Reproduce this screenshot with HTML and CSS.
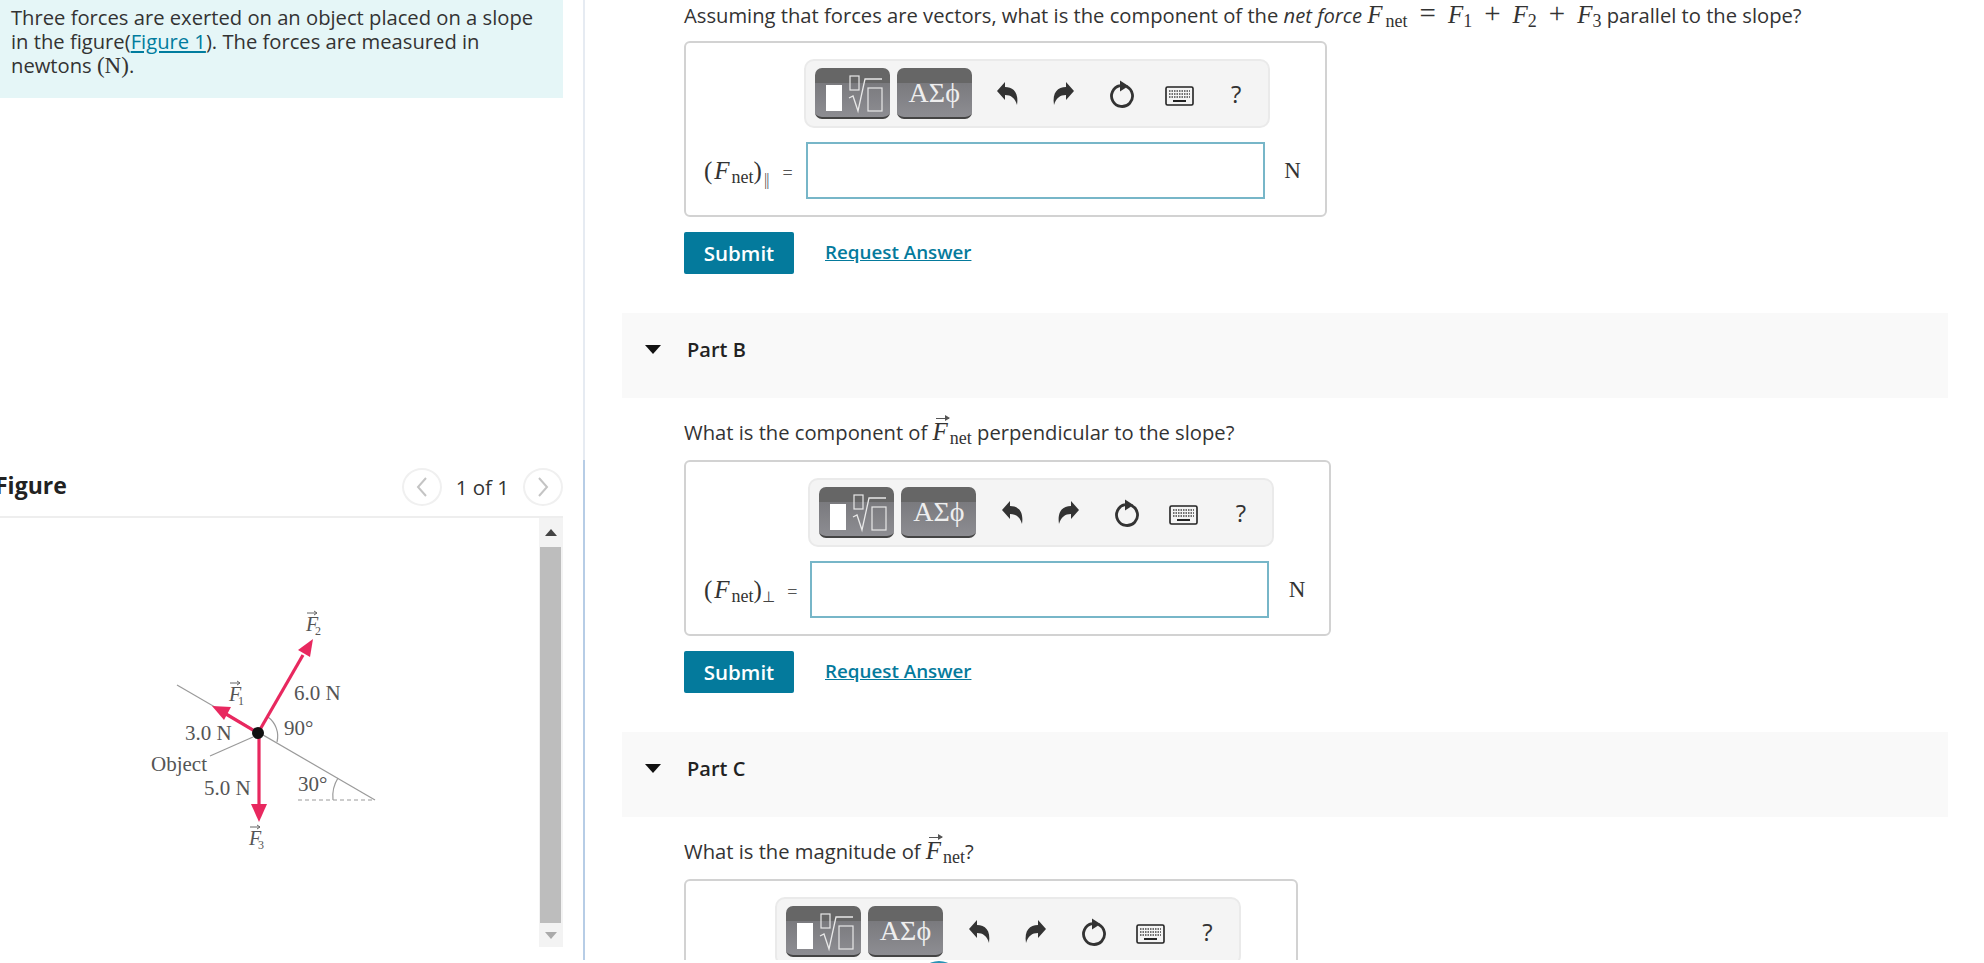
FILE: index.html
```html
<!DOCTYPE html>
<html lang="en">
<head>
  <meta charset="UTF-8">
  <title>Forces on a slope</title>
  <link rel="stylesheet" href="styles.css">
</head>
<body>
<svg class="icon-defs" xmlns="http://www.w3.org/2000/svg">
  <symbol id="ico-root" viewBox="0 0 75 51">
    <rect x="11" y="19" width="16" height="26" fill="#fff"/>
    <rect x="35" y="10" width="9" height="14" fill="none" stroke="#e8e8e8" stroke-width="1.2"/>
    <path d="M34 32 L38 30 L43 45 L50 13 H67" fill="none" stroke="#e8e8e8" stroke-width="1.3"/>
    <rect x="53" y="22" width="14" height="23" fill="none" stroke="#e8e8e8" stroke-width="1.2"/>
  </symbol>
  <symbol id="ico-undo" viewBox="0 0 24 26">
    <path d="M1 10 L9 1 V6 C17 6 23 11 21 24 C19 17 15 14 9 14 V19 Z" fill="#333"/>
  </symbol>
  <symbol id="ico-reset" viewBox="0 0 26 28">
    <path d="M17.500 6.500 A10.500 10.500 0 1 1 11 5.700" fill="none" stroke="#333" stroke-width="2.800"/>
    <path d="M11 0.500 L19.500 6 L11 11.500 Z" fill="#333"/>
  </symbol>
  <symbol id="ico-keys" viewBox="0 0 29 20">
    <rect x="1" y="1" width="27" height="18" rx="1.500" fill="#f4f4f4" stroke="#222" stroke-width="1.600"/>
    <path d="M4 5 H25 M4 8 H25 M4 11 H25" stroke="#444" stroke-width="1.500" stroke-dasharray="1.500 1"/>
    <path d="M8 15 H21" stroke="#222" stroke-width="2"/>
  </symbol>
</svg>

<div class="page">
  <div class="left">
    <div class="intro">
      Three forces are exerted on an object placed on a slope in the figure(<a href="#">Figure 1</a>). The forces are measured in newtons <span class="math-n">(N)</span>.
    </div>

    <div class="fig-head">
      <h2>Figure</h2>
      <div class="pager">
        <span class="pager-btn"><svg width="14" height="22"><path d="M11 2 L3 11 L11 20" fill="none" stroke="#c4c4c4" stroke-width="2"/></svg></span>
        <span class="pager-text">1 of 1</span>
        <span class="pager-btn"><svg width="14" height="22"><path d="M3 2 L11 11 L3 20" fill="none" stroke="#c4c4c4" stroke-width="2"/></svg></span>
      </div>
    </div>

    <div class="fig-body">
      <div class="fig-area">
        <svg class="diagram" width="539" height="430" viewBox="0 518 539 430" xmlns="http://www.w3.org/2000/svg">
          <g fill="none" stroke="#9a9a9a" stroke-width="1.200">
            <path d="M177 685 L375 800"/>
            <path d="M210 756 L253 737"/>
            <path d="M298 800 H375" stroke-dasharray="4 3"/>
            <path d="M268 717 A24 24 0 0 1 277 742"/>
            <path d="M338 778 A34 34 0 0 0 333 800"/>
          </g>
          <g stroke="#e8285f" stroke-width="3.200" fill="#e8285f">
            <path d="M258 733 L303 655"/>
            <path d="M313 639 L298 650 L310 657 Z" stroke="none"/>
            <path d="M258 733 L226 714"/>
            <path d="M212 706 L231 707 L224 720 Z" stroke="none"/>
            <path d="M259 733 V806"/>
            <path d="M259 822 L251 804 H267 Z" stroke="none"/>
          </g>
          <circle cx="258" cy="733" r="6" fill="#111"/>
          <g class="fig-label">
            <text x="294" y="700">6.0 N</text>
            <text x="185" y="740">3.0 N</text>
            <text x="284" y="735">90°</text>
            <text x="151" y="771">Object</text>
            <text x="204" y="795">5.0 N</text>
            <text x="298" y="791">30°</text>
          </g>
          <g class="fig-force">
            <text x="306" y="631">F</text><text class="fig-sub" x="315" y="635">2</text>
            <text x="229" y="701">F</text><text class="fig-sub" x="238" y="705">1</text>
            <text x="249" y="845">F</text><text class="fig-sub" x="258" y="849">3</text>
          </g>
          <g fill="none" stroke="#666" stroke-width="1">
            <path d="M307 613 H317 M314 611 L317 613 L314 615"/>
            <path d="M230 683 H240 M237 681 L240 683 L237 685"/>
            <path d="M250 827 H260 M257 825 L260 827 L257 829"/>
          </g>
        </svg>
      </div>
      <div class="scrollbar">
        <div class="scroll-btn"><span class="arrow-up"></span></div>
        <div class="scroll-thumb"></div>
        <div class="scroll-btn"><span class="arrow-down"></span></div>
      </div>
    </div>
  </div>

  <div class="divider"></div>

  <div class="right">
    <p class="question first">Assuming that forces are vectors, what is the component of the <em>net force</em> <span class="math"><i>F</i><span class="sub wide">net</span><span class="op">=</span><i>F</i><span class="sub">1</span><span class="op">+</span><i>F</i><span class="sub">2</span><span class="op">+</span><i>F</i><span class="sub">3</span></span> parallel to the slope?</p>

    <div class="answer-box">
      <div class="toolbar">
        <button class="tpl-btn"><svg width="75" height="51"><use href="#ico-root"/></svg></button>
        <button class="tpl-btn tpl-greek">ΑΣϕ</button>
        <span class="tool tool-first"><svg width="24" height="26"><use href="#ico-undo"/></svg></span>
        <span class="tool"><svg class="flip" width="24" height="26"><use href="#ico-undo"/></svg></span>
        <span class="tool"><svg width="26" height="28"><use href="#ico-reset"/></svg></span>
        <span class="tool tool-low"><svg width="29" height="20"><use href="#ico-keys"/></svg></span>
        <span class="tool tool-help">?</span>
      </div>
      <label class="ans-label math">(<i>F</i><span class="sub">net</span>)<span class="sub par">||</span> <span class="eq">=</span></label>
      <input class="ans-input" type="text">
      <span class="ans-unit">N</span>
    </div>
    <div class="actions">
      <button class="submit">Submit</button>
      <a class="request" href="#">Request Answer</a>
    </div>

    <div class="part-bar"><span class="caret"></span><span>Part B</span></div>
    <p class="question">What is the component of <span class="math"><i class="vec">F</i><span class="sub">net</span></span> perpendicular to the slope?</p>

    <div class="answer-box">
      <div class="toolbar">
        <button class="tpl-btn"><svg width="75" height="51"><use href="#ico-root"/></svg></button>
        <button class="tpl-btn tpl-greek">ΑΣϕ</button>
        <span class="tool tool-first"><svg width="24" height="26"><use href="#ico-undo"/></svg></span>
        <span class="tool"><svg class="flip" width="24" height="26"><use href="#ico-undo"/></svg></span>
        <span class="tool"><svg width="26" height="28"><use href="#ico-reset"/></svg></span>
        <span class="tool tool-low"><svg width="29" height="20"><use href="#ico-keys"/></svg></span>
        <span class="tool tool-help">?</span>
      </div>
      <label class="ans-label math">(<i>F</i><span class="sub">net</span>)<span class="sub perp">⊥</span> <span class="eq">=</span></label>
      <input class="ans-input" type="text">
      <span class="ans-unit">N</span>
    </div>
    <div class="actions">
      <button class="submit">Submit</button>
      <a class="request" href="#">Request Answer</a>
    </div>

    <div class="part-bar"><span class="caret"></span><span>Part C</span></div>
    <p class="question">What is the magnitude of <span class="math"><i class="vec">F</i><span class="sub">net</span></span>?</p>

    <div class="answer-box">
      <div class="toolbar">
        <button class="tpl-btn"><svg width="75" height="51"><use href="#ico-root"/></svg></button>
        <button class="tpl-btn tpl-greek">ΑΣϕ</button>
        <span class="tool tool-first"><svg width="24" height="26"><use href="#ico-undo"/></svg></span>
        <span class="tool"><svg class="flip" width="24" height="26"><use href="#ico-undo"/></svg></span>
        <span class="tool"><svg width="26" height="28"><use href="#ico-reset"/></svg></span>
        <span class="tool tool-low"><svg width="29" height="20"><use href="#ico-keys"/></svg></span>
        <span class="tool tool-help">?</span>
      </div>
      <label class="ans-label ans-label-short math"></label>
      <input class="ans-input" type="text">
    </div>
  </div>
</div>
<div class="float-btn"></div>
</body>
</html>
```

FILE: styles.css
```css
* {
  margin: 0;
  padding: 0;
  box-sizing: border-box;
}

body {
  background: #fff;
  color: #333;
  font-family: "Open Sans", sans-serif;
  font-size: 20.2px;
  height: 963px;
  overflow: hidden;
}

.icon-defs {
  position: absolute;
  width: 0;
  height: 0;
}

.page {
  display: flex;
  height: 960px;
  overflow: hidden;
}

/* peeks in under the bottom edge */
.float-btn {
  position: absolute;
  left: 918px;
  top: 961px;
  width: 42px;
  height: 42px;
  border-radius: 50%;
  background: #2a93b5;
}

/* left column */
.left {
  width: 583px;
  flex: none;
  overflow: hidden;
}

.divider {
  width: 2px;
  flex: none;
  background: linear-gradient(#e6ebf2 460px, #b7cde6 460px);
}

.intro {
  width: 563px;
  height: 98px;
  background: #e5f6f7;
  padding: 5px 14px 0 11px;
  font-size: 20.2px;
  line-height: 24px;
}

.intro a {
  color: #007c9e;
}

.math-n {
  font-family: "Liberation Serif", serif;
  font-size: 23px;
}

.fig-head {
  width: 563px;
  height: 62px;
  margin-top: 358px;
  padding-bottom: 2px;
  display: flex;
  align-items: center;
  justify-content: space-between;
  border-bottom: 2px solid #eee;
}

.fig-head h2 {
  font-size: 23px;
  font-weight: 700;
  color: #222;
  margin: 0 0 1px -5px;
}

.pager {
  display: flex;
  align-items: center;
  gap: 14px;
  margin-top: 3px;
}

.pager-btn {
  width: 40px;
  height: 38px;
  border: 2px solid #f0f0f0;
  border-radius: 50%;
  display: flex;
  align-items: center;
  justify-content: center;
}

.pager-text {
  font-size: 20.5px;
}

.fig-body {
  display: flex;
  width: 563px;
}

.fig-area {
  width: 539px;
  flex: none;
}

.diagram {
  display: block;
}

.fig-label text {
  font-family: "Liberation Serif", serif;
  font-size: 21px;
  fill: #555;
}

.fig-force text {
  font-family: "Liberation Serif", serif;
  font-style: italic;
  font-size: 20px;
  fill: #555;
}

.fig-force .fig-sub {
  font-style: normal;
  font-size: 12px;
}

.scrollbar {
  width: 24px;
  height: 429px;
  display: flex;
  flex-direction: column;
  background: #f3f3f3;
}

.scroll-btn {
  height: 29px;
  display: flex;
  align-items: center;
  justify-content: center;
}

.scroll-btn:last-child {
  height: 24px;
}

.scroll-thumb {
  flex: 1;
  margin: 0 2px 0 1px;
  background: #bdbdbd;
}

.arrow-up {
  border-left: 6px solid transparent;
  border-right: 6px solid transparent;
  border-bottom: 7px solid #444;
}

.arrow-down {
  border-left: 6px solid transparent;
  border-right: 6px solid transparent;
  border-top: 7px solid #aaa;
}

/* right column */
.right {
  flex: 1;
  padding-left: 37px;
  padding-right: 36px;
}

.question {
  margin: 19px 0 13px 62px;
  line-height: 30px;
  white-space: nowrap;
}

.question.first {
  margin-top: 0;
  margin-bottom: 11px;
}

.math {
  font-family: "Liberation Serif", serif;
  font-size: 25px;
}

.sub {
  font-size: 18px;
  vertical-align: -4px;
  line-height: 0;
}

.sub.wide {
  margin-left: 3px;
}

.op {
  margin: 0 12px;
  font-size: 29px;
  line-height: 0;
}

.ans-label i {
  margin-left: 2px;
}

.ans-label .sub {
  margin-left: 2px;
}

.ans-label .par {
  letter-spacing: -1px;
  font-size: 16px;
  vertical-align: -6px;
  color: #555;
}

.ans-label .perp {
  font-family: "DejaVu Sans", sans-serif;
  font-size: 15px;
  color: #444;
  margin-left: 0;
}

.eq {
  font-size: 18px;
  color: #555;
  margin-left: 8px;
}

.perp + .eq {
  margin-left: 6px;
}

.vec {
  position: relative;
  display: inline-block;
  padding-right: 2px;
}

.vec::before {
  content: "";
  position: absolute;
  left: 3px;
  top: 1px;
  width: 13px;
  border-top: 1px solid #555;
}

.vec::after {
  content: "";
  position: absolute;
  left: 12px;
  top: -2px;
  border-left: 5px solid #555;
  border-top: 3px solid transparent;
  border-bottom: 3px solid transparent;
}

.answer-box {
  width: fit-content;
  margin-left: 62px;
  padding: 16px 60px 16px 18px;
  border: 2px solid #d2d2d2;
  border-radius: 6px;
  display: grid;
  grid-template-columns: auto 459px;
  column-gap: 13px;
  row-gap: 14px;
  position: relative;
}

.toolbar {
  grid-column: 2;
  grid-row: 1;
  width: 466px;
  height: 69px;
  margin-left: -2px;
  padding-left: 9px;
  display: flex;
  align-items: center;
  gap: 7px;
  background: #f4f4f4;
  border: 2px solid #eaeaea;
  border-radius: 10px;
}

.tpl-btn {
  width: 75px;
  height: 51px;
  border: none;
  border-bottom: 2px solid #444;
  border-radius: 7px;
  color: #eee;
  background: linear-gradient(#666 0, #666 15px, #7a7a7e 15px, #8d8d92 100%);
  font-family: "Liberation Serif", serif;
  font-size: 28px;
  overflow: hidden;
}

.tpl-btn svg {
  display: block;
  margin-top: -2px;
}

.tool {
  width: 57px;
  flex: none;
  margin-left: -7px;
  display: flex;
  align-items: center;
  justify-content: center;
}

.tool-first {
  margin-left: 1px;
}

.tool-low {
  padding-top: 4px;
}

.tool-help {
  font-size: 24px;
  color: #333;
}

.flip {
  transform: scaleX(-1) translateX(2px);
}

.ans-label {
  grid-column: 1;
  grid-row: 2;
  align-self: center;
  white-space: nowrap;
  color: #333;
}

.ans-label-short {
  width: 60px;
}

.ans-input {
  grid-column: 2;
  grid-row: 2;
  height: 57px;
  border: 2px solid #77b6c8;
  background: #fff;
}

.ans-unit {
  position: absolute;
  right: 24px;
  bottom: 31px;
  font-family: "Liberation Serif", serif;
  font-size: 23px;
}

.actions {
  display: flex;
  align-items: center;
  gap: 31px;
  margin: 15px 0 0 62px;
}

.submit {
  width: 110px;
  height: 42px;
  border: none;
  border-radius: 2px;
  background: #047a9c;
  color: #fff;
  font-family: "Open Sans", sans-serif;
  font-size: 20.5px;
  font-weight: 600;
}

.request {
  color: #047a9c;
  font-weight: 600;
  font-size: 18.8px;
  margin-bottom: 3px;
}

.part-bar {
  height: 85px;
  margin-top: 39px;
  padding: 0 0 12px 23px;
  background: #f9f9f9;
  display: flex;
  align-items: center;
  gap: 26px;
  font-weight: 600;
  font-size: 20px;
  color: #222;
}

.caret {
  border-left: 8px solid transparent;
  border-right: 8px solid transparent;
  border-top: 9px solid #111;
}
```
